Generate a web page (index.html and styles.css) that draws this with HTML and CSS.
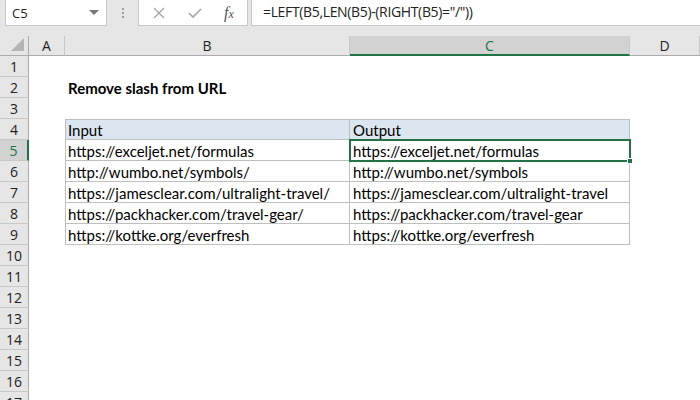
FILE: index.html
```html
<!DOCTYPE html>
<html>
<head>
<meta charset="utf-8">
<link rel="stylesheet" href="styles.css">
</head>
<body>
<div class="app">
  <div class="fbar">
    <div class="namebox"><span class="nb-text">C5</span><span class="nb-arrow"></span></div>
    <div class="dots"><i></i><i></i><i></i></div>
    <div class="fxbox">
      <svg class="ic" width="14" height="14" viewBox="0 0 14 14"><path d="M2 2 L12 12 M12 2 L2 12" stroke="#a6a6a6" stroke-width="1.4" fill="none"/></svg>
      <svg class="ic" width="16" height="14" viewBox="0 0 16 14"><path d="M2 7 L6 11 L14 3" stroke="#a6a6a6" stroke-width="1.6" fill="none"/></svg>
      <span class="fx">f<span class="fxx">x</span></span>
    </div>
    <div class="formula">=LEFT(B5,LEN(B5)-(RIGHT(B5)="/"))</div>
  </div>
  <div class="sheet">
    <div class="ch corner"><span class="tri"></span></div>
    <div class="ch">A</div>
    <div class="ch">B</div>
    <div class="ch sel">C</div>
    <div class="ch">D</div>

    <div class="rh">1</div><div class="c"></div><div class="c"></div><div class="c"></div><div class="c"></div>
    <div class="rh">2</div><div class="c"></div><div class="c title">Remove slash from URL</div><div class="c"></div><div class="c"></div>
    <div class="rh">3</div><div class="c"></div><div class="c"></div><div class="c"></div><div class="c"></div>
    <div class="rh">4</div><div class="c"></div><div class="c t th tl tt">Input</div><div class="c t th tt">Output</div><div class="c"></div>
    <div class="rh rsel">5</div><div class="c"></div><div class="c t tl">https://exceljet.net/formulas</div><div class="c t active">https://exceljet.net/formulas<span class="handle"></span></div><div class="c"></div>
    <div class="rh">6</div><div class="c"></div><div class="c t tl">http://wumbo.net/symbols/</div><div class="c t">http://wumbo.net/symbols</div><div class="c"></div>
    <div class="rh">7</div><div class="c"></div><div class="c t tl">https://jamesclear.com/ultralight-travel/</div><div class="c t">https://jamesclear.com/ultralight-travel</div><div class="c"></div>
    <div class="rh">8</div><div class="c"></div><div class="c t tl">https://packhacker.com/travel-gear/</div><div class="c t">https://packhacker.com/travel-gear</div><div class="c"></div>
    <div class="rh">9</div><div class="c"></div><div class="c t tl">https://kottke.org/everfresh</div><div class="c t">https://kottke.org/everfresh</div><div class="c"></div>
    <div class="rh">10</div><div class="c"></div><div class="c"></div><div class="c"></div><div class="c"></div>
    <div class="rh">11</div><div class="c"></div><div class="c"></div><div class="c"></div><div class="c"></div>
    <div class="rh">12</div><div class="c"></div><div class="c"></div><div class="c"></div><div class="c"></div>
    <div class="rh">13</div><div class="c"></div><div class="c"></div><div class="c"></div><div class="c"></div>
    <div class="rh">14</div><div class="c"></div><div class="c"></div><div class="c"></div><div class="c"></div>
    <div class="rh">15</div><div class="c"></div><div class="c"></div><div class="c"></div><div class="c"></div>
    <div class="rh">16</div><div class="c"></div><div class="c"></div><div class="c"></div><div class="c"></div>
    <div class="rh">17</div><div class="c"></div><div class="c"></div><div class="c"></div><div class="c"></div>
  </div>
</div>
</body>
</html>
```

FILE: styles.css
```css
* { box-sizing: border-box; }
html, body { margin: 0; padding: 0; }
body { width: 700px; height: 400px; overflow: hidden; background: #fff; }
.app { width: 700px; height: 400px; overflow: hidden; }

.fbar {
  height: 36px;
  background: #e6e6e6;
  display: flex;
  align-items: flex-start;
  padding-left: 5px;
}
.namebox {
  width: 102px; height: 26px;
  background: #fff;
  border: 1px solid #c6c6c6;
  border-top: none;
  display: flex; align-items: center; justify-content: space-between;
  padding: 0 7px 0 6px;
  font-family: "Open Sans", "Noto Sans", sans-serif;
  font-size: 13px; color: #222;
}
.nb-arrow {
  width: 0; height: 0;
  border-left: 5px solid transparent; border-right: 5px solid transparent;
  border-top: 5px solid #777;
}
.dots { width: 31px; height: 26px; display: flex; flex-direction: column; align-items: center; justify-content: center; gap: 2px; }
.dots i { display: block; width: 2px; height: 2px; background: #a0a0a0; }
.fxbox {
  width: 110px; height: 26px;
  background: #fff;
  border: 1px solid #c6c6c6;
  border-top: none;
  display: flex; align-items: center;
  padding-left: 13px; gap: 21px;
}
.fx { font-family: "Liberation Serif", serif; font-style: italic; font-size: 16px; color: #555; }
.fxx { font-size: 12px; }
.formula {
  flex: 1; height: 26px; margin-left: 3px;
  background: #fff;
  border: 1px solid #c6c6c6; border-top: none; border-right: none;
  padding-left: 11px;
  font-family: "Open Sans", "Noto Sans", sans-serif;
  font-size: 14px; line-height: 24px; color: #222;
  letter-spacing: -0.35px;
}

.sheet {
  display: grid;
  grid-template-columns: 29px 36px 285px 280px 70px;
  grid-template-rows: 20px repeat(17, 21px);
}
.ch {
  background: #e6e6e6;
  border-right: 1px solid #c8c8c8;
  border-bottom: 1px solid #ababab;
  font-family: "Open Sans", "Noto Sans", sans-serif;
  font-size: 14px; color: #222;
  display: flex; align-items: center; justify-content: center;
  line-height: 19px;
}
.ch.corner { position: relative; border-right: 1px solid #ababab; }
.tri {
  position: absolute; right: 4px; bottom: 4px;
  width: 0; height: 0;
  border-left: 13px solid transparent;
  border-bottom: 13px solid #b4b4b4;
}
.ch.sel { background: #d2d2d2; color: #217346; border-bottom: 2px solid #217346; }
.rh {
  background: #e6e6e6;
  border-right: 1px solid #ababab;
  border-bottom: 1px solid #c8c8c8;
  font-family: "Open Sans", "Noto Sans", sans-serif;
  font-size: 14px; color: #222;
  display: flex; align-items: center; justify-content: center;
}
.rh.rsel { background: #d2d2d2; color: #217346; border-right: 2px solid #217346; }
.c {
  font-family: "Lato", "Liberation Sans", sans-serif;
  font-size: 15px; color: #000;
  padding-left: 3px;
  padding-top: 1px;
  line-height: 20px;
  white-space: nowrap;
  position: relative;
}
.title { font-weight: bold; }
.t { border-right: 1px solid #bfbfbf; border-bottom: 1px solid #bfbfbf; }
.tl { border-left: 1px solid #bfbfbf; padding-left: 2px; }
.tt { border-top: 1px solid #bfbfbf; padding-top: 0; }
.th { background: #dce6f1; }
.active { outline: 2px solid #217346; outline-offset: -1px; z-index: 2; }
.handle {
  position: absolute; right: -4px; bottom: -4px;
  width: 6px; height: 6px;
  background: #217346; border: 1px solid #fff;
}
```
